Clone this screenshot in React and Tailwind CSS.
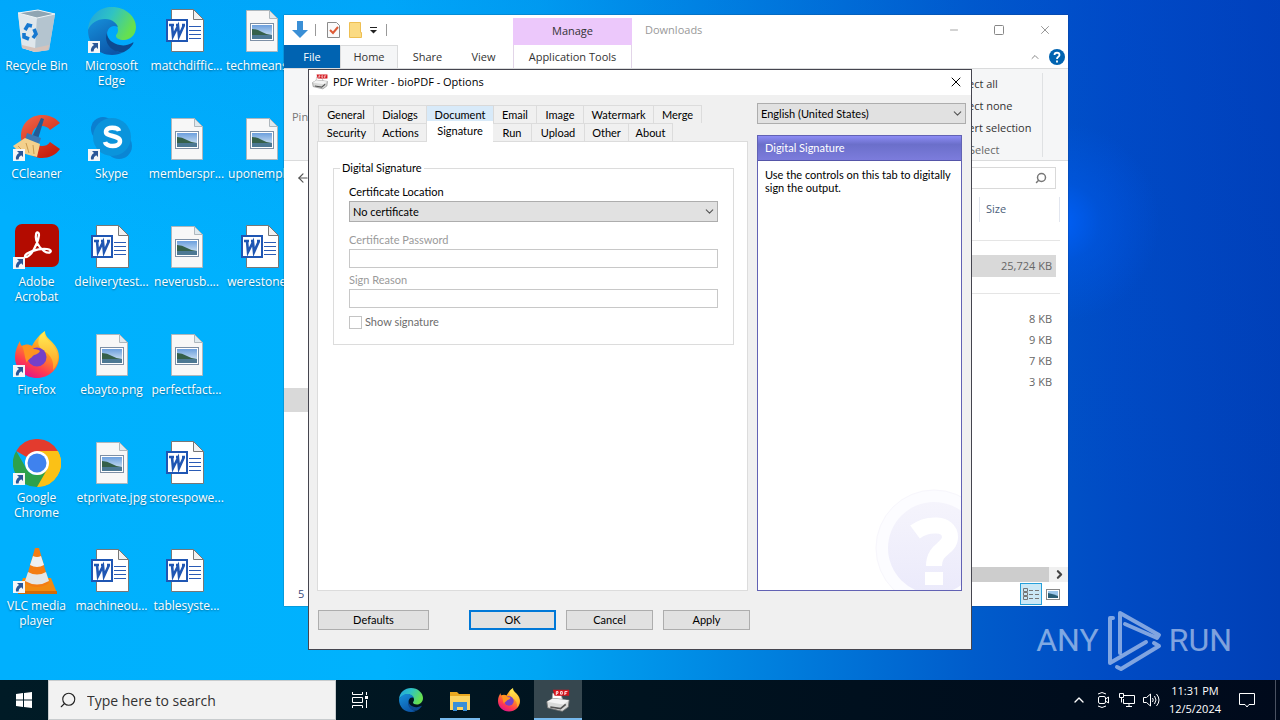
import { useState } from "react";
import { ArrowLeft, ChevronDown, ChevronRight, ChevronUp, Minus, Search, Square, X } from "lucide-react";

/* ---------- Icons ---------- */

function ShortcutArrow() {
  return (
    <svg viewBox="0 0 12 12" className="absolute bottom-0.5 left-0 h-3 w-3">
      <rect width="12" height="12" fill="#f4f6f8" />
      <path d="M4 2h6v6L8.200 6.200Q5.500 7.500 5.500 10.500H3Q2.200 6.500 6 4z" fill="#2b5797" />
    </svg>
  );
}

function RecycleBinIcon() {
  return (
    <svg viewBox="0 0 48 48" className="h-full w-full">
      <path d="M5 6 25 3l17 4-6 36-14 2-13-4z" fill="#c9d6df" />
      <path d="M5 6 24 11 22 45 9 41z" fill="#dfe7ec" />
      <path d="M24 11 42 7 36 43 22 45z" fill="#b4c4cf" />
      <path d="M5 6 25 3l17 4-18 4z" fill="#8fa5b3" stroke="#eef4f7" />
      <path d="M9 38 22 41l14-3-1 5-13 2-13-4z" fill="#d6c3bb" />
      <g fill="none" stroke="#1678d0" strokeWidth="3.600">
        <path d="M12 23l3-5 4 1" />
        <path d="M21 22l2 5-3 4" />
        <path d="M16 32l-5-2v-4" />
      </g>
    </svg>
  );
}

function EdgeIcon() {
  return (
    <svg viewBox="0 0 48 48" className="h-full w-full">
      <defs>
        <linearGradient id="edgeTop" x1="0" y1="0" x2="1" y2="0.4">
          <stop offset="0" stopColor="#1f9fe0" />
          <stop offset="0.5" stopColor="#2fc3c4" />
          <stop offset="1" stopColor="#66e04f" />
        </linearGradient>
        <linearGradient id="edgeLeft" x1="0" y1="0" x2="0.6" y2="1">
          <stop offset="0" stopColor="#1691dc" />
          <stop offset="1" stopColor="#0c56a8" />
        </linearGradient>
      </defs>
      <path d="M0 23C1 8 12 0 24 0c14 0 24 10 24 20 0 8-6 13-12 13-5 0-8-2-8-4s2-2 2-6c0-5-5-10-12-10C10 13 3 17 0 23z" fill="url(#edgeTop)" />
      <path d="M0 23c3-7 9-11 17-11 8 0 12 5 13 8-6-3-11 1-11 8 0 10 8 19 17 17-4 2-8 3-12 3C10 48 0 37 0 23z" fill="url(#edgeLeft)" />
      <path d="M19 26c-4 10 6 21 17 19 4-2 7-5 9-8 1-2 0-2-1-1-4 2-8 3-12 2-7-1-13-6-13-12z" fill="#0d4a91" />
    </svg>
  );
}

function CCleanerIcon() {
  return (
    <svg viewBox="0 0 48 48" className="h-full w-full">
      <defs>
        <linearGradient id="ccRed" x1="0" y1="0" x2="0.6" y2="1">
          <stop offset="0" stopColor="#f2694b" />
          <stop offset="1" stopColor="#c8200f" />
        </linearGradient>
      </defs>
      <path d="M47 8C41 1 34 0 29 0 17 0 8 9 8 21s9 22 21 22c7 0 14-3 18-9l-10-7c-2 3-5 4-8 4-6 0-10-4-10-10s4-10 10-10c3 0 6 1 8 4z" fill="url(#ccRed)" />
      <path d="M28 3 31 4 25 24 19 22z" fill="#245a94" />
      <path d="M14 18 28 23 26 29 12 25z" fill="#3b78b4" />
      <path d="M12 23 27 29 24 42 16 40 6 37 0 31z" fill="#f3d08c" />
      <path d="M5 31 12 38M13 28l3 10M20 30l1 9" stroke="#c99a4f" fill="none" />
    </svg>
  );
}

function SkypeIcon() {
  return (
    <svg viewBox="0 0 48 48" className="h-full w-full">
      <circle cx="15" cy="14" r="12" fill="#0b7fd0" />
      <circle cx="31" cy="31" r="13" fill="#0a86d4" />
      <circle cx="24" cy="22" r="19" fill="#0a94dc" />
      <path d="M31 16c-1-4-13-5-13 1 0 5 14 3 14 9 0 7-14 6-15 1" fill="none" stroke="#fff" strokeWidth="4.500" />
    </svg>
  );
}

function AcrobatIcon() {
  return (
    <svg viewBox="0 0 48 48" className="h-full w-full">
      <rect x="2" y="1" width="44" height="43" rx="7" fill="#b30b00" />
      <path
        d="M12 34c-1-4 13-9 22-8 7 1 3 6-3 2-6-4-9-11-8-16 0-4 3-3 3 0-1 8-8 23-14 22z"
        fill="none"
        stroke="#fff"
        strokeWidth="2.200"
      />
    </svg>
  );
}

function FirefoxIcon() {
  return (
    <svg viewBox="0 0 48 48" className="h-full w-full">
      <defs>
        <linearGradient id="foxBody" x1="0.8" y1="0" x2="0.3" y2="1">
          <stop offset="0" stopColor="#fff44f" />
          <stop offset="0.4" stopColor="#ff9a1f" />
          <stop offset="0.75" stopColor="#ff3b50" />
          <stop offset="1" stopColor="#e0128c" />
        </linearGradient>
        <linearGradient id="foxTail" x1="0" y1="0" x2="0" y2="1">
          <stop offset="0" stopColor="#ffee55" />
          <stop offset="1" stopColor="#ff9d22" />
        </linearGradient>
      </defs>
      <path d="M7 10c0 3 1 4 2 5 3-2 7-2 10 0 3-6 8-12 13-15 0 5 3 7 7 11 5 5 7 10 7 15 0 12-10 21-22 21S2 38 2 26c0-6 2-11 5-16z" fill="url(#foxBody)" />
      <path d="M31 1c0 5 3 7 7 11 9 10 9 19 2 27 1-9-2-15-9-19-6-4-7-8-4-15z" fill="url(#foxTail)" />
      <circle cx="24" cy="26" r="9.500" fill="#7540c9" />
      <path d="M9 15c5-2 9 0 12 3 3 0 5 1 6 2-2 4-6 3-8 6-2 2-5 3-5 6-3-6-2-11-5-17z" fill="#ff9320" />
    </svg>
  );
}

function ChromeIcon() {
  return (
    <svg viewBox="0 0 48 48" className="h-full w-full">
      <path d="M24 24 3.200 12A24 24 0 0 1 44.800 12z" fill="#e33b2e" />
      <path d="M24 24 44.800 12A24 24 0 0 1 24 48z" fill="#fbc116" />
      <path d="M24 12h20.800A24 24 0 0 1 24 48l10.400-18z" fill="#fbc116" />
      <path d="M3.200 12A24 24 0 0 0 24 48l10.400-18A12 12 0 0 1 13.600 30z" fill="#2da14c" />
      <circle cx="24" cy="24" r="12" fill="#fff" />
      <circle cx="24" cy="24" r="9.500" fill="#3f82ee" />
    </svg>
  );
}

function VlcIcon() {
  return (
    <svg viewBox="0 0 48 48" className="h-full w-full">
      <path d="M10 31h28l6 15H5z" fill="#f28a10" />
      <path d="M5 44h39v3H5z" fill="#d56a06" />
      <path d="M22 1h4l10 35q-12 8-24 0z" fill="#f47d12" />
      <path d="M20 9q4 2 8 0l3 9q-7 4-14 0z" fill="#eef0f0" />
      <path d="M15 25q9 5 18 0l3 9q-12 7-24 0z" fill="#e4e6e6" />
    </svg>
  );
}

function WordIcon() {
  return (
    <svg viewBox="0 0 48 48" className="h-full w-full">
      <path d="M8.500 2.500h22l10 10v32h-32z" fill="#fff" stroke="#777" />
      <path d="M30.500 2.500v10h10z" fill="#f1f1f1" stroke="#777" />
      <path d="M26 19.500h12M26 23.500h12M26 27.500h12M26 31.500h12" stroke="#2a5bb5" />
      <rect x="4" y="13" width="20" height="21" fill="#fff" stroke="#1f56b3" strokeWidth="2" />
      <path d="M6 18h5M13 18h3M19 18h3M9 18l1 11 5-10 1 10 5-11" fill="none" stroke="#1f56b3" strokeWidth="2.600" />
    </svg>
  );
}

function PictureIcon() {
  return (
    <svg viewBox="0 0 48 48" className="h-full w-full">
      <defs>
        <linearGradient id="sky" x1="0" y1="0" x2="0" y2="1">
          <stop offset="0" stopColor="#6c9fdd" />
          <stop offset="1" stopColor="#e3f0f8" />
        </linearGradient>
      </defs>
      <path d="M8.500 3.500h23l8 8v33h-31z" fill="#f7f7f7" stroke="#aeb7bd" />
      <path d="M31.500 3.500v8h8z" fill="#dfe9ee" stroke="#aeb7bd" />
      <rect x="12.500" y="16.500" width="23" height="17" fill="#fff" stroke="#7d8fa5" />
      <path d="M14 18h20v14H14z" fill="url(#sky)" />
      <path d="M14 22q5 0 10 3t10 3v1H14z" fill="#35604a" />
      <path d="M14 28h20v4H14z" fill="#4c7893" />
    </svg>
  );
}

function PrinterIcon() {
  return (
    <svg viewBox="0 0 28 28" className="h-full w-full">
      <path d="M8 5 18 8 20 15 7 14z" fill="#fff" stroke="#aaa" />
      <path d="M1 15 8 11 27 13 26 21 19 26 2 22z" fill="#d9dad9" stroke="#777" />
      <path d="M1 15 8 11 27 13 20 18z" fill="#f4f4f4" />
      <path d="M5 21 17 23 23 18" fill="none" stroke="#555" strokeWidth="2" />
      <path d="M8 1h19v7H10z" fill="#d4141c" />
      <path d="M12 7V3h2v2h-2M17 3v3h2V3zM22 7V3h3M22 5h2" fill="none" stroke="#fff" />
    </svg>
  );
}

function FolderIcon() {
  return (
    <svg viewBox="0 0 24 24" className="h-full w-full">
      <path d="M2 3h7l2 2h11v16H2z" fill="#e9a820" />
      <path d="M2 7h20v14H2z" fill="#fcd462" />
      <path d="M5 13h14v9h-4v-4H9v4H5z" fill="#3a8fd8" />
    </svg>
  );
}

function LandscapeIcon() {
  return (
    <svg viewBox="0 0 14 11" className="h-[11px] w-[14px]">
      <rect x="0.500" y="0.500" width="13" height="10" fill="#fff" stroke="#888" />
      <path d="M2 2h10v7H2z" fill="#9cc6ea" />
      <path d="M2 4q5 1 10 3v2H2z" fill="#2a5d74" />
    </svg>
  );
}

/* ---------- Desktop ---------- */

const desktopColumns = [
  [
    { label: "Recycle Bin", Icon: RecycleBinIcon },
    { label: "CCleaner", Icon: CCleanerIcon, shortcut: true },
    { label: "Adobe Acrobat", Icon: AcrobatIcon, shortcut: true },
    { label: "Firefox", Icon: FirefoxIcon, shortcut: true },
    { label: "Google Chrome", Icon: ChromeIcon, shortcut: true },
    { label: "VLC media player", Icon: VlcIcon, shortcut: true },
  ],
  [
    { label: "Microsoft Edge", Icon: EdgeIcon, shortcut: true },
    { label: "Skype", Icon: SkypeIcon, shortcut: true },
    { label: "deliverytest...", Icon: WordIcon },
    { label: "ebayto.png", Icon: PictureIcon },
    { label: "etprivate.jpg", Icon: PictureIcon },
    { label: "machineou...", Icon: WordIcon },
  ],
  [
    { label: "matchdiffic...", Icon: WordIcon },
    { label: "memberspr...", Icon: PictureIcon },
    { label: "neverusb....", Icon: PictureIcon },
    { label: "perfectfact...", Icon: PictureIcon },
    { label: "storespowe...", Icon: WordIcon },
    { label: "tablesyste...", Icon: WordIcon },
  ],
  [
    { label: "techmeans...", Icon: PictureIcon },
    { label: "uponempl...", Icon: PictureIcon },
    { label: "werestone...", Icon: WordIcon },
  ],
];

function DesktopIcons() {
  return (
    <div className="-ml-px flex">
      {desktopColumns.map((column, i) => (
        <div key={i} className="flex w-[75px] flex-col">
          {column.map(({ label, Icon, shortcut }) => (
            <div key={label} className="flex h-[108px] flex-col items-center pt-[7px]">
              <div className="relative h-12 w-12">
                <Icon />
                {shortcut && <ShortcutArrow />}
              </div>
              <span className="mt-[3px] text-center text-[12px] leading-[15px] text-white [text-shadow:0_1px_2px_rgba(0,0,0,0.4)]">
                {label}
              </span>
            </div>
          ))}
        </div>
      ))}
    </div>
  );
}

function Watermark() {
  return (
    <div className="absolute right-12 bottom-2 flex h-16 items-center gap-1.5 font-['Roboto',sans-serif] text-[32px] leading-none text-white/50">
      <span>ANY</span>
      <svg viewBox="0 0 58 64" className="h-16 w-[58px]" fill="none" stroke="currentColor" strokeWidth="4" strokeLinejoin="round" strokeLinecap="round">
        <path d="M8 10H5v45L41 34" />
        <path d="M15 45V5l39 22-2 3L20 16" />
        <path d="M12 59l4 2 38-23-5-3" />
      </svg>
      <span>RUN</span>
    </div>
  );
}

/* ---------- Explorer window ---------- */

const fileSizes = ["8 KB", "9 KB", "7 KB", "3 KB"];

function ExplorerWindow() {
  return (
    <section className="absolute top-[15px] left-[284px] flex h-[591px] w-[784px] flex-col bg-white text-[11px] text-[#333] shadow-[0_0_1px_#234]">
      {/* Title bar */}
      <header className="flex h-[30px] shrink-0 items-center">
        <div className="flex w-[229px] items-center pl-2">
          <svg viewBox="0 0 16 18" className="h-[18px] w-4">
            <path d="M5 0h6v9h5l-8 8-8-8h5z" fill="#3a8fd6" />
          </svg>
          <span className="ml-[7px] h-3 w-px bg-[#999]" />
          <svg viewBox="0 0 13 16" className="ml-[11px] h-4 w-[13px]">
            <path d="M0.500 0.500h9l3 3v12h-12z" fill="#fafafa" stroke="#8b8b8b" />
            <path d="M3 8l3 3 5-6" fill="none" stroke="#dd5a35" strokeWidth="2" />
          </svg>
          <svg viewBox="0 0 13 16" className="ml-[9px] h-4 w-[13px]">
            <path d="M0.500 0.500h11v10h1v5h-12z" fill="#fbdb83" stroke="#eebf52" />
          </svg>
          <svg viewBox="0 0 8 8" className="ml-2 h-2 w-2">
            <path d="M0 1.500h7" stroke="#222" />
            <path d="M0 4h7L3.500 7.500z" fill="#222" />
          </svg>
          <span className="ml-2 h-3 w-px bg-[#999]" />
        </div>
        <div className="flex h-[27px] w-[119px] items-center justify-center self-end bg-[#ecc8fb]">Manage</div>
        <h2 className="ml-[13px] flex-1 text-[#999]">Downloads</h2>
        <div className="flex items-center gap-[33px] pr-4 text-[#888]">
          <button aria-label="Minimize"><Minus size={12} strokeWidth={1.500} /></button>
          <button aria-label="Maximize"><Square size={12} strokeWidth={2} /></button>
          <button aria-label="Close"><X size={14} strokeWidth={1.500} /></button>
        </div>
      </header>

      {/* Ribbon tabs */}
      <nav className="flex h-6 shrink-0 items-stretch border-b border-[#dadbdc]">
        <button className="w-14 bg-[#0063b1] pt-0.5 text-white">File</button>
        <button className="w-[58px] border-x border-t border-[#dadbdc] bg-[#f5f6f7]">Home</button>
        <button className="w-[59px] pt-0.5">Share</button>
        <button className="w-[53px] pt-0.5">View</button>
        <span className="w-[3px]" />
        <button className="w-[119px] border-x border-[#e2d5e8] pt-0.5">Application Tools</button>
        <span className="flex-1" />
        <button aria-label="Collapse ribbon" className="mr-2 text-[#888]"><ChevronUp size={12} /></button>
        <button aria-label="Help" className="mr-[3px] self-center">
          <svg viewBox="0 0 16 16" className="h-4 w-4">
            <circle cx="8" cy="8" r="8" fill="#0063b1" />
            <path d="M5.500 6c0-3 5-3 5 0 0 2-2.500 1.500-2.500 4M8 11.500v2" fill="none" stroke="#fff" strokeWidth="1.800" />
          </svg>
        </button>
      </nav>

      {/* Ribbon */}
      <div className="flex h-[92px] shrink-0 justify-between border-b border-[#dadbdc] bg-[#f5f6f7]">
        <span className="self-center pt-1.5 pl-2 text-[#777]">Pin</span>
        <div className="mr-[25px] flex h-[84px] w-[90px] flex-col self-center border-r border-[#dfe1e3] leading-[22px]">
          <span>Select all</span>
          <span>Select none</span>
          <span>Invert selection</span>
          <span className="pl-4 text-[#666]">Select</span>
        </div>
      </div>

      {/* Address row */}
      <div className="flex h-[34px] shrink-0 items-center justify-between pr-3 pl-3">
        <button aria-label="Back" className="text-[#555]"><ArrowLeft size={14} /></button>
        <label className="flex h-[22px] w-[180px] items-center border border-[#d9d9d9] pr-2">
          <input type="text" aria-label="Search Downloads" className="min-w-0 flex-1 outline-none" />
          <Search size={12} strokeWidth={3} className="-scale-x-100 text-[#777]" />
        </label>
      </div>

      {/* Files */}
      <div className="flex min-h-0 flex-1">
        <aside className="w-40 pt-[193px]">
          <div className="h-6 bg-[#d9d9d9]" />
        </aside>
        <div className="flex flex-1 flex-col">
          <div className="flex-1 pr-2">
            <div className="flex h-[29px] justify-end py-0.5">
              <div className="w-[81px] border-x border-[#e2e6ef] pl-1.5 leading-6 text-[#4c607a]">Size</div>
            </div>
            <div className="mt-4 border-t border-[#e5e5e5]" />
            <div className="mt-3.5 mr-1 bg-[#d9d9d9] pr-1 text-right leading-[22px] text-[#666]">25,724 KB</div>
            <div className="mt-4 border-t border-[#e5e5e5]" />
            <ul className="mt-3.5 mr-1 pr-1 text-right leading-[21px] text-[#666]">
              {fileSizes.map((size) => (
                <li key={size}>{size}</li>
              ))}
            </ul>
          </div>
          <div className="flex h-[15px] bg-[#cdcdcd]">
            <span className="flex-1" />
            <button aria-label="Scroll right" className="flex w-[19px] items-center justify-center bg-[#f0f0f0] pl-0.5 text-[#444]">
              <ChevronRight size={13} strokeWidth={4} />
            </button>
          </div>
        </div>
      </div>

      {/* Status bar */}
      <footer className="flex h-6 shrink-0 items-center pr-2 pl-3.5 text-[#3a4a7a]">
        <span className="flex-1">5</span>
        <button aria-label="Details view" className="mr-1 flex h-[22px] w-[22px] items-center justify-center border border-[#26a0da] bg-[#cbe8f6]">
          <svg viewBox="0 0 16 12" className="h-3 w-4" fill="none" stroke="#777">
            <path d="M0.500 0.500h4v3h-4zM0.500 4.500h4v3h-4zM0.500 8.500h4v3h-4zM6 2.500h4M6 6.500h4M6 10.500h4M12 2.500h4M12 6.500h4M12 10.500h4" />
          </svg>
        </button>
        <button aria-label="Large icons view"><LandscapeIcon /></button>
      </footer>
    </section>
  );
}

/* ---------- Options dialog ---------- */

const tabRows = [
  [
    { name: "General", width: "w-[55px]" },
    { name: "Dialogs", width: "w-[53px]" },
    { name: "Document", width: "w-[67px]" },
    { name: "Email", width: "w-[43px]" },
    { name: "Image", width: "w-[47px]" },
    { name: "Watermark", width: "w-[70px]" },
    { name: "Merge", width: "w-[48px]" },
  ],
  [
    { name: "Security", width: "w-[56px]" },
    { name: "Actions", width: "w-[52px]" },
    { name: "Signature", width: "w-[66px]" },
    { name: "Run", width: "w-[39px]" },
    { name: "Upload", width: "w-[53px]" },
    { name: "Other", width: "w-[44px]" },
    { name: "About", width: "w-[44px]" },
  ],
];

function tabClass(name, active) {
  if (name === active) return "relative z-10 -mt-0.5 -mb-px h-[21px] bg-white pb-0.5";
  if (name === "Document") return "h-[18px] border-t border-r border-[#d9d9d9] bg-[#d8eaf9]";
  return "h-[18px] border-t border-r border-[#dcdcdc] bg-[#f0f0f0]";
}

function SelectBox({ id, options, label }) {
  return (
    <div className="relative">
      <select
        id={id}
        aria-label={label}
        className="block h-[21px] w-full appearance-none border border-[#adadad] bg-[#e1e1e1] pl-[3px] text-black"
      >
        {options.map((option) => (
          <option key={option}>{option}</option>
        ))}
      </select>
      <ChevronDown size={13} strokeWidth={2} className="pointer-events-none absolute top-1 right-0.5 text-[#555]" />
    </div>
  );
}

function HelpPanel() {
  return (
    <aside className="relative mt-[11px] mr-1 flex-1 border border-[#6262b4] bg-white">
      <h3 className="h-[25px] border-b border-[#5555a8] bg-linear-to-b from-[#8d8cf5] via-[#6b6fca] via-35% to-[#7c7cdc] pl-[7px] leading-6 text-white">
        Digital Signature
      </h3>
      <p className="px-[7px] pt-[7px] leading-[13px]">Use the controls on this tab to digitally sign the output.</p>
      <svg viewBox="0 0 88 102" className="absolute right-0 bottom-0 h-[102px] w-[88px]">
        <defs>
          <linearGradient id="helpDisc" x1="0" y1="0" x2="0" y2="1">
            <stop offset="0" stopColor="#f5f4fc" />
            <stop offset="1" stopColor="#ebeafb" />
          </linearGradient>
        </defs>
        <circle cx="61" cy="60" r="58" fill="#fcfcff" stroke="#f7f6fc" />
        <circle cx="61" cy="60" r="46" fill="url(#helpDisc)" />
        <path d="M42 44C54 35 77 34 77 49c0 12-16 11-16 29" fill="none" stroke="#fff" strokeWidth="16" />
        <path d="M52 84h18v13H52z" fill="#fff" />
      </svg>
    </aside>
  );
}

function OptionsDialog() {
  const [activeTab, setActiveTab] = useState("Signature");
  const [showSignature, setShowSignature] = useState(false);

  return (
    <section
      role="dialog"
      aria-labelledby="options-title"
      className="absolute top-[69px] left-[308px] z-10 flex h-[581px] w-[664px] flex-col border border-[#45454f] bg-[#f0f0f0] font-['Lato','Liberation_Sans',sans-serif] text-[11px] leading-4 text-black"
    >
      <header className="flex h-[25px] shrink-0 items-center bg-white pr-[7px] pb-0.5 pl-[3px] font-['Open_Sans','Noto_Sans',sans-serif]">
        <span className="h-4 w-4"><PrinterIcon /></span>
        <h1 id="options-title" className="ml-[5px] flex-1">PDF Writer - bioPDF - Options</h1>
        <button aria-label="Close"><X size={16} strokeWidth={1.500} /></button>
      </header>

      <div className="flex min-h-0 flex-1 gap-[9px] pt-2 pr-[5px] pl-2">
        {/* Tabs and page */}
        <div className="flex flex-1 flex-col pt-0.5">
          <div role="tablist">
            {tabRows.map((row, i) => (
              <div key={i} className="ml-px flex border-l border-[#dcdcdc]">
                {row.map(({ name, width }) => (
                  <button
                    key={name}
                    role="tab"
                    aria-selected={name === activeTab}
                    onClick={() => setActiveTab(name)}
                    className={`${width} ${tabClass(name, activeTab)}`}
                  >
                    {name}
                  </button>
                ))}
              </div>
            ))}
          </div>
          <div role="tabpanel" className="flex-1 border border-[#dcdcdc] bg-white pt-[18px] pr-[13px] pl-[15px]">
            <fieldset className="border border-[#dcdcdc] px-[15px] pb-3.5">
              <legend className="-ml-[9px] px-0.5">Digital Signature</legend>
              <label htmlFor="cert-location" className="mt-2 mb-px block">Certificate Location</label>
              <SelectBox id="cert-location" options={["No certificate"]} />
              <label htmlFor="cert-password" className="mt-2.5 mb-px block text-[#9a9a9a]">Certificate Password</label>
              <input id="cert-password" type="password" disabled className="block h-[19px] w-full border border-[#c8c8c8]" />
              <label htmlFor="sign-reason" className="mt-1 mb-px block text-[#9a9a9a]">Sign Reason</label>
              <input id="sign-reason" type="text" disabled className="block h-[19px] w-full border border-[#c8c8c8]" />
              <label className="mt-1.5 flex items-center gap-[3px] text-[#6d6d6d]">
                <input
                  type="checkbox"
                  checked={showSignature}
                  onChange={(e) => setShowSignature(e.target.checked)}
                  className="h-[13px] w-[13px] appearance-none border border-[#c4c4c4] checked:bg-[#0078d7]"
                />
                Show signature
              </label>
            </fieldset>
          </div>
        </div>

        {/* Language and help */}
        <div className="flex w-[209px] flex-col">
          <SelectBox label="Language" options={["English (United States)"]} />
          <HelpPanel />
        </div>
      </div>

      <footer className="flex shrink-0 gap-2.5 py-[19px] pl-[9px]">
        <button className="mr-[30px] h-5 w-[111px] border border-[#adadad] bg-[#e1e1e1]">Defaults</button>
        <button className="h-5 w-[87px] border-2 border-[#0078d7] bg-[#e1e1e1]">OK</button>
        <button className="h-5 w-[87px] border border-[#adadad] bg-[#e1e1e1]">Cancel</button>
        <button className="h-5 w-[87px] border border-[#adadad] bg-[#e1e1e1]">Apply</button>
      </footer>
    </section>
  );
}

/* ---------- Taskbar ---------- */

function Taskbar() {
  return (
    <footer className="flex h-10 shrink-0 items-stretch bg-linear-to-r from-[#001b26] via-[#00131f] to-[#000a1c] text-white">
      <button aria-label="Start" className="flex w-12 items-center justify-center">
        <svg viewBox="0 0 16 16" className="h-4 w-4" fill="#fff">
          <path d="M0 2l7-1v6.500H0zM8 1l8-1v7.500H8zM0 8.500h7V15l-7-1zM8 8.500h8V16l-8-1z" />
        </svg>
      </button>
      <label className="flex w-72 items-center gap-2.5 border border-[#c8ccce] bg-[#f2f2f2] pl-2.5">
        <Search size={18} strokeWidth={1.500} className="-scale-x-100 text-[#222]" />
        <input
          type="text"
          aria-label="Search"
          placeholder="Type here to search"
          className="min-w-0 flex-1 text-[14px] outline-none placeholder:text-[#333]"
        />
      </label>
      <button aria-label="Task view" className="flex w-12 items-center justify-center">
        <svg viewBox="0 0 16 16" className="h-4 w-4" fill="none" stroke="#fff">
          <path d="M0.500 0v2.500h10V0M0.500 5.500h10v5h-10zM0.500 16v-2.500h10V16M14.500 0v3M14.500 8v8" />
          <path d="M13 4h3v3h-3z" fill="#fff" stroke="none" />
        </svg>
      </button>
      <div className="ml-[3px] flex gap-px">
        <button aria-label="Microsoft Edge" className="flex w-12 items-center justify-center">
          <span className="h-6 w-6"><EdgeIcon /></span>
        </button>
        <button aria-label="File Explorer" className="flex w-12 flex-col items-center justify-end gap-[5px]">
          <span className="h-6 w-6"><FolderIcon /></span>
          <span className="h-0.5 w-10 bg-[#76b9ed]" />
        </button>
        <button aria-label="Firefox" className="flex w-12 items-center justify-center">
          <span className="h-6 w-6"><FirefoxIcon /></span>
        </button>
        <button aria-label="PDF Writer" className="flex w-12 flex-col items-center justify-end gap-[5px] bg-[#36474f]">
          <span className="h-6 w-6"><PrinterIcon /></span>
          <span className="h-0.5 w-12 bg-[#76b9ed]" />
        </button>
      </div>
      <span className="flex-1" />
      <div className="flex items-center gap-2 pr-2">
        <button aria-label="Show hidden icons"><ChevronUp size={16} strokeWidth={2} /></button>
        <svg viewBox="0 0 16 16" className="h-4 w-4" fill="none" stroke="#fff">
          <rect x="3.500" y="4.500" width="7" height="7" rx="1.500" />
          <path d="M10.500 7l3-2v6l-3-2M3 2Q7 -1 11 2M3 14q4 3 8 0" />
        </svg>
        <svg viewBox="0 0 16 16" className="h-4 w-4" fill="none" stroke="#fff">
          <path d="M5 3.500h10.500v8H4.500V7M10 11.500v3M7 14.500h6M0.500 1.500h4v4h-4zM2.500 5.500v5" />
        </svg>
        <svg viewBox="0 0 18 16" className="h-4 w-[18px]" fill="none" stroke="#fff">
          <path d="M0.500 5.500h3l4-3.500v12l-4-3.500h-3zM9.500 6q1.500 2 0 4M11.500 4q3 4 0 8M13.500 2q5 6 0 12" />
        </svg>
      </div>
      <div className="flex flex-col items-center justify-center pr-[18px] text-[11px] leading-[18px]">
        <span>11:31 PM</span>
        <span>12/5/2024</span>
      </div>
      <button aria-label="Notifications" className="pr-5">
        <svg viewBox="0 0 16 16" className="h-4 w-4" fill="none" stroke="#fff">
          <path d="M0.500 1.500h15v11H10l-2 2.500-2-2.500H0.500z" />
        </svg>
      </button>
      <span className="mr-1 w-px bg-[#4a5262]" />
    </footer>
  );
}

export default function App() {
  return (
    <div className="flex h-screen min-h-[680px] flex-col overflow-hidden font-['Open_Sans','Noto_Sans',sans-serif]">
      <main className="relative flex-1 overflow-hidden bg-[radial-gradient(circle_at_1060px_222px,rgba(0,98,255,0.85),rgba(0,98,255,0.3)_40px,transparent_100px),linear-gradient(195deg,rgba(0,70,215,0.2),transparent_55%),linear-gradient(90deg,#00b0fe_0%,#00b2fd_30%,#00a6f4_42%,#0080de_60%,#005ccb_76%,#004bc4_87%,#003fb6_100%)]">
        <DesktopIcons />
        <Watermark />
        <ExplorerWindow />
        <OptionsDialog />
      </main>
      <Taskbar />
    </div>
  );
}
